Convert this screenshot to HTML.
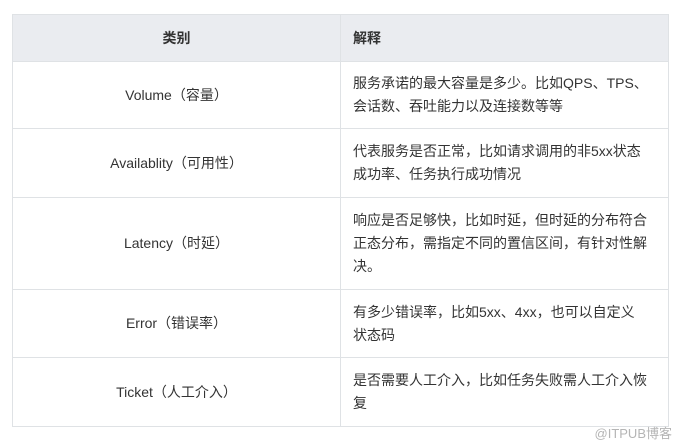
<!DOCTYPE html>
<html><head><meta charset="utf-8"><style>
body{margin:0;background:#fff;width:682px;height:444px;position:relative;font-family:"Liberation Sans","Noto Sans CJK SC",sans-serif;color:#333;font-size:14px;}
table{position:absolute;left:12px;top:14px;width:657px;border-collapse:collapse;}
td,th{border:1px solid #dfe2e5;padding:0 12px;line-height:23px;white-space:nowrap;}
th{background:#eaecf0;height:46px;font-weight:bold;}
th:first-child{text-align:center;}
th:last-child{text-align:left;}
td:first-child{text-align:center;width:303px;}
.wm{position:absolute;right:10px;top:423px;color:#b5b5b5;font-size:13px;}
</style></head><body>
<table>
<tr><th>类别</th><th>解释</th></tr>
<tr style="height:67px"><td>Volume（容量）</td><td>服务承诺的最大容量是多少。比如QPS、TPS、<br>会话数、吞吐能力以及连接数等等</td></tr>
<tr style="height:69px"><td>Availablity（可用性）</td><td>代表服务是否正常，比如请求调用的非5xx状态<br>成功率、任务执行成功情况</td></tr>
<tr style="height:92px"><td>Latency（时延）</td><td>响应是否足够快，比如时延，但时延的分布符合<br>正态分布，需指定不同的置信区间，有针对性解<br>决。</td></tr>
<tr style="height:68px"><td>Error（错误率）</td><td>有多少错误率，比如5xx、4xx，也可以自定义<br>状态码</td></tr>
<tr style="height:69px"><td>Ticket（人工介入）</td><td>是否需要人工介入，比如任务失败需人工介入恢<br>复</td></tr>
</table>
<div class="wm">@ITPUB博客</div>
</body></html>
